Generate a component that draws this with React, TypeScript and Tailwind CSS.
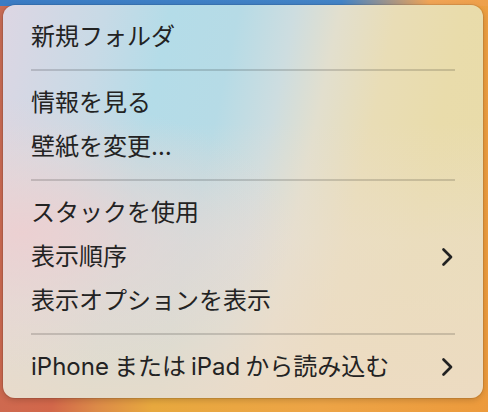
import { Fragment } from "react";

type MenuItem = {
  label: React.ReactNode;
  submenu?: boolean;
};

const groups: MenuItem[][] = [
  [{ label: "新規フォルダ" }],
  [{ label: "情報を見る" }, { label: "壁紙を変更…" }],
  [
    { label: "スタックを使用" },
    { label: "表示順序", submenu: true },
    { label: "表示オプションを表示" },
  ],
  [
    {
      label: (
        <>
          iPhone<span className="ml-[5px]">または</span>
          <span className="ml-[5px]">iPad</span>
          <span className="ml-[5px]">から読み込む</span>
        </>
      ),
      submenu: true,
    },
  ],
];

function Chevron() {
  return (
    <svg width="12" height="20" viewBox="0 0 12 20" className="mr-[2px]">
      <path
        d="M2.5 2.5 L10 10 L2.5 17.5"
        fill="none"
        stroke="#222"
        strokeWidth="2.7"
        strokeLinecap="round"
        strokeLinejoin="round"
      />
    </svg>
  );
}

export default function App() {
  return (
    <main className="h-[412px] w-[488px] overflow-hidden bg-no-repeat bg-[linear-gradient(to_right,#3b7cc4_0%,#4383c6_70%,#f0a456_88%,#eea04a_100%),linear-gradient(100deg,#c96c56_0%,#d2674a_22%,#dc8a48_30%,#e7a83e_40%,#eda446_70%,#ec9a3c_100%)] bg-[length:100%_6px,100%_100%] pl-[3px] pt-[5px]">
      <div className="h-[393px] w-[480px] rounded-[12px] bg-[radial-gradient(ellipse_at_4%_58%,rgba(238,206,208,0.85)_0%,rgba(238,210,210,0.4)_22%,transparent_42%),linear-gradient(to_bottom,transparent_30%,rgba(236,222,208,0.5)_60%,rgba(237,219,198,0.85)_100%),linear-gradient(102deg,#ddd6e3_0%,#c8dae6_18%,#b4dce8_30%,#b6dbe6_42%,#cddde0_52%,#e2dfce_60%,#e9ddb6_70%,#e9dcab_82%,#e8dba8_100%)] px-7 pb-[9px] pt-[10px] font-['Inter','Noto_Sans_CJK_JP',sans-serif] text-[24px] text-[#232323] shadow-[0_0_0_1px_rgba(0,0,0,0.08),0_2px_6px_rgba(0,0,0,0.18)]">
        {groups.map((group, gi) => (
          <Fragment key={gi}>
            {gi > 0 && (
              <div className="flex h-[22px] items-center">
                <div className="h-[2px] w-full bg-black/15" />
              </div>
            )}
            {group.map((item, ii) => (
              <div key={ii} className="flex h-11 items-center justify-between">
                <span className="leading-none">{item.label}</span>
                {item.submenu && <Chevron />}
              </div>
            ))}
          </Fragment>
        ))}
      </div>
    </main>
  );
}
